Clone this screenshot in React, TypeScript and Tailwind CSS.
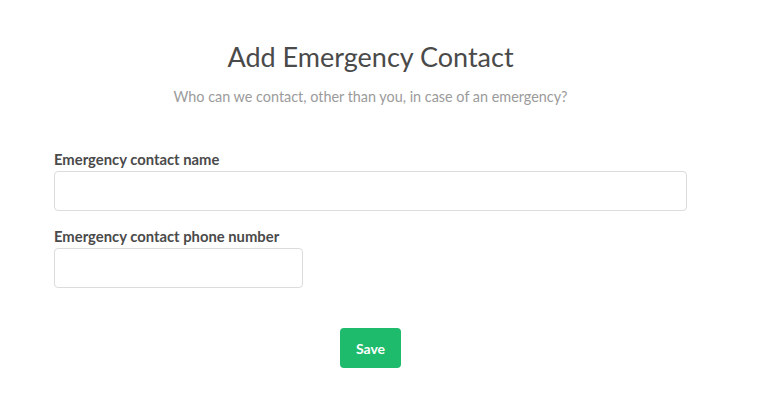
import React from 'react';

export default function App() {
  return (
    <div className="w-[741px] bg-white font-['Lato',sans-serif]">
      <div className="mx-auto w-[633px] pt-[40px]">
        <h1 className="text-center text-[27px] leading-[34px] text-[#4a4a4a]">Add Emergency Contact</h1>
        <p className="mt-[14px] text-center text-[14.4px] leading-[18px] text-[#9b9b9b]">
          Who can we contact, other than you, in case of an emergency?
        </p>
        <form className="mt-[44px] flex flex-col">
          <label className="text-[14.8px] font-bold leading-[18px] text-[#4a4a4a]">Emergency contact name</label>
          <input className="mt-[3px] h-[40px] w-full rounded-[4px] border border-[#dcdcdc] px-3 outline-none" />
          <label className="mt-[16px] text-[14.8px] font-bold leading-[18px] text-[#4a4a4a]">Emergency contact phone number</label>
          <input className="mt-[3px] h-[40px] w-[249px] rounded-[4px] border border-[#dcdcdc] px-3 outline-none" />
          <div className="mt-[40px] flex justify-center">
            <button type="button" className="h-[40px] w-[61px] rounded-[4px] bg-[#1dbb6b] text-[14px] font-bold text-white">
              Save
            </button>
          </div>
        </form>
      </div>
    </div>
  );
}
